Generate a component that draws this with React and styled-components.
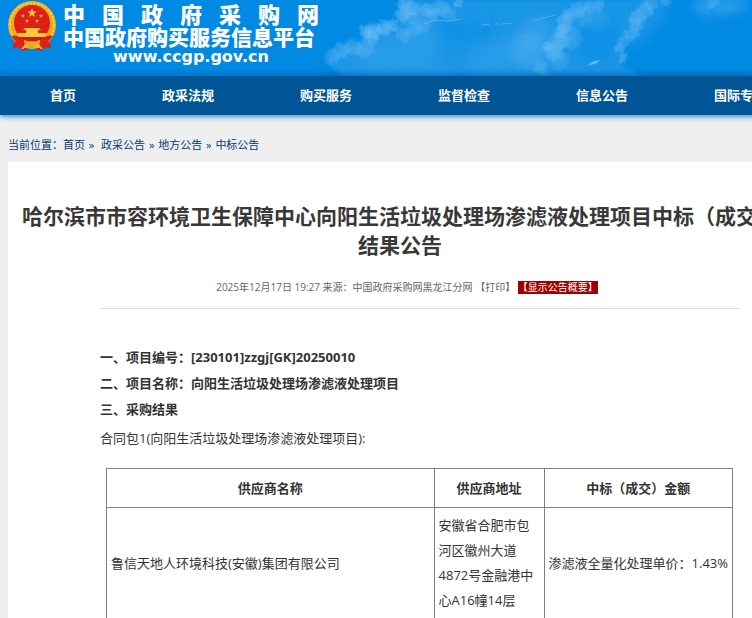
import React from "react";
import styled, { createGlobalStyle } from "styled-components";

const GlobalStyle = createGlobalStyle`
  * { box-sizing: border-box; }
  body {
    margin: 0;
    background: #efefef;
    color: #333;
    font-family: "Open Sans", "Noto Sans CJK SC", sans-serif;
    font-size: 13px;
    overflow: hidden;
  }
  a { color: inherit; text-decoration: none; }
`;

const Page = styled.div`
  min-width: 800px;
`;

const Header = styled.header`
  display: flex;
  height: 76px;
  padding-left: 8px;
  background: linear-gradient(#008ae4 0 68px, #0079cc 76px);
`;

const Emblem = styled.svg`
  flex: none;
  width: 48px;
  height: 54px;
`;

const Brand = styled.a`
  flex: none;
  display: block;
  width: 256px;
  margin-left: 7px;
  padding-top: 1px;
  color: #fff;
  font-family: "Noto Sans CJK SC", sans-serif;
  font-weight: 900;
`;

const BrandName = styled.span`
  display: block;
  font-size: 22px;
  line-height: 24px;
  text-align: justify;
  text-align-last: justify;
`;

const BrandPlatform = styled.span`
  display: block;
  font-size: 21px;
  line-height: 22px;
  white-space: nowrap;
`;

const BrandSite = styled.span`
  display: block;
  font-family: "DejaVu Sans", sans-serif;
  font-size: 16px;
  line-height: 20px;
  font-weight: 700;
  text-align: center;
`;

const Sky = styled.svg`
  flex: none;
  width: 432px;
  height: 76px;
`;

const Nav = styled.nav`
  display: flex;
  gap: 86px;
  height: 39px;
  padding: 0 0 2px 50px;
  align-items: center;
  background: #005596;
  box-shadow: 0 1px 6px #1678b8;
`;

const NavLink = styled.a`
  flex: none;
  color: #fff;
  font-weight: 700;
  line-height: 20px;
`;

const Breadcrumb = styled.nav`
  padding: 20px 8px 7px;
  color: #003b75;
  font-size: 11px;
  line-height: 20px;
`;

const Separator = styled.span`
  margin: 0 1px;
  white-space: pre;
`;

const Panel = styled.main`
  margin: 0 8px;
  padding: 40px 0 0;
  background: #fff;
`;

const Title = styled.h1`
  margin: 0;
  padding: 0 12px;
  color: #383838;
  font-size: 21px;
  line-height: 29px;
  text-align: center;
`;

const Body = styled.article`
  margin: 0 52px 0 92px;
`;

const Meta = styled.p`
  margin: 0;
  padding: 16px 26px 10px 0;
  border-bottom: 1px solid #ddd;
  color: #666;
  font-size: 10px;
  line-height: 22px;
  text-align: center;
  white-space: nowrap;
`;

const PlainButton = styled.button`
  padding: 0;
  border: 0;
  background: none;
  color: inherit;
  font: inherit;
  line-height: 13px;
`;

const SummaryButton = styled(PlainButton)`
  background: #a00000;
  color: #fff;
`;

const Sections = styled.div`
  padding-top: 35px;
`;

const SectionHeading = styled.h2`
  margin: 0;
  color: #333;
  font-family: "Noto Sans", "Noto Sans CJK SC", sans-serif;
  font-size: 13px;
  line-height: 26px;
`;

const PackageName = styled.p`
  margin: 3px 0 17px;
  line-height: 26px;
`;

const TableWrap = styled.div`
  padding: 0 7px 0 6px;
`;

const Table = styled.table`
  width: 100%;
  border-collapse: collapse;
  line-height: 25px;
  th, td { border: 1px solid #808080; }
`;

const HeadCell = styled.th`
  width: ${(p) => p.$width || "auto"};
  padding: 7px 4px 6px;
  font-weight: 700;
`;

const Cell = styled.td`
  padding: 5px 4px;
  white-space: ${(p) => (p.$single ? "nowrap" : "normal")};
`;

const navItems = ["首页", "政采法规", "购买服务", "监督检查", "信息公告", "国际专栏"];

// x, y, radius, opacity of each bright billow
const puffs = [
  [13, 56, 9, 0.35], [23, 50, 10, 0.4], [34, 47, 10, 0.4], [46, 49, 11, 0.35],
  [46, 32, 8, 0.6], [55, 31, 10, 0.6], [65, 28, 9, 0.55], [73, 25, 8, 0.5],
  [52, 38, 8, 0.4], [84, 35, 9, 0.35], [94, 30, 10, 0.35], [104, 26, 9, 0.35],
  [84, 4, 8, 0.5], [84, 15, 9, 0.6], [93, 8, 10, 0.45], [94, 17, 9, 0.35],
  [107, 10, 9, 0.5], [114, 15, 9, 0.4], [122, 8, 10, 0.4], [130, 14, 9, 0.3],
  [139, 3, 6, 0.5], [208, 50, 22, 0.22], [218, 34, 22, 0.14],
  [222, 68, 9, 0.35], [229, 47, 7, 0.5], [235, 51, 11, 0.5],
  [241, 40, 11, 0.5], [242, 31, 9, 0.45], [246, 24, 10, 0.5], [249, 15, 8, 0.5],
  [259, 10, 9, 0.4], [270, 7, 8, 0.4], [280, 6, 7, 0.35], [264, 17, 12, 0.25],
  [252, 38, 13, 0.3], [240, 60, 12, 0.3], [279, 20, 14, 0.15],
  [301, 48, 6, 0.5], [304, 57, 6, 0.5], [306, 39, 8, 0.4], [313, 33, 8, 0.4],
  [316, 25, 9, 0.45], [319, 17, 9, 0.45], [326, 11, 9, 0.4], [332, 4, 9, 0.4],
  [347, 1, 7, 0.4], [394, 2, 8, 0.35], [404, 7, 12, 0.18],
  [419, 4, 12, 0.15], [384, 6, 12, 0.15],
];

const Clouds = () => (
  <Sky viewBox="0 0 432 76" aria-hidden="true">
    <defs>
      <filter id="billow" x="-5%" y="-20%" width="110%" height="140%">
        <feTurbulence type="fractalNoise" baseFrequency="0.18" numOctaves="3" seed="8" result="noise" />
        <feDisplacementMap in="SourceGraphic" in2="noise" scale="8" xChannelSelector="R" yChannelSelector="G" />
      </filter>
      <filter id="soft" x="-10%" y="-20%" width="120%" height="140%">
        <feGaussianBlur stdDeviation="2" />
      </filter>
      <filter id="softer" x="-10%" y="-40%" width="120%" height="180%">
        <feGaussianBlur stdDeviation="7" />
      </filter>
      <radialGradient id="puff">
        <stop offset="0" stopColor="#78c2f5" />
        <stop offset="0.65" stopColor="#78c2f5" stopOpacity="0.7" />
        <stop offset="1" stopColor="#78c2f5" stopOpacity="0" />
      </radialGradient>
      <linearGradient id="shade" x1="0" y1="0" x2="0" y2="1">
        <stop offset="0" stopColor="#0066b0" stopOpacity="0" />
        <stop offset="1" stopColor="#0066b0" stopOpacity="0.35" />
      </linearGradient>
    </defs>
    <g fill="#78c2f5">
      <path filter="url(#soft)" opacity="0.22" d="M8 62 L20 50 L44 46 L46 30 L80 22 L84 0 L330 0 L312 22 L298 50 L304 66 L322 76 L22 76 Z" />
      <path filter="url(#softer)" opacity="0.14" d="M28 62 L45 42 L90 36 L105 22 L125 32 L115 60 L140 70 L70 76 Z M150 50 L230 18 L225 72 L150 70 Z" />
      <path filter="url(#softer)" opacity="0.2" d="M305 50 L326 5 L350 0 L345 18 L322 45 Z M368 0 L432 0 L420 12 L382 20 Z" />
    </g>
    <path filter="url(#softer)" fill="#008ae4" opacity="0.5" d="M115 22 L165 26 L180 34 L130 42 Z M262 26 L300 18 L294 54 L280 62 L260 52 Z" />
    <g filter="url(#billow)">
      {puffs.map(([x, y, r, o]) => (
        <circle key={`${x}-${y}`} cx={x} cy={y} r={r} fill="url(#puff)" opacity={o} />
      ))}
    </g>
    <path d="M105 24 L116 20 L128 21 L143 19 M162 25 L171 24 M176 24 H180 M183 24 L193 23 M214 21 L224 18 L236 15" stroke="#7cc4f6" strokeWidth="1" fill="none" opacity="0.5" />
    <path d="M269 66 L273 62 L281 60 L278 63 Z" fill="#8bccf8" opacity="0.7" />
    <rect y="70" width="432" height="6" fill="url(#shade)" />
  </Sky>
);

const star = "M0-5 L1.2-1.6 L4.8-1.5 L2 .6 L3 4 L0 2 L-3 4 L-2 .6 L-4.8-1.5 L-1.2-1.6 Z";

const NationalEmblem = () => (
  <Emblem viewBox="0 0 48 54" role="img" aria-label="国徽">
    <path d="M8 33 L5 48 L11 47 L14 51 L24 48 L34 51 L37 47 L43 48 L40 33 Z" fill="#d81913" />
    <circle cx="24" cy="25" r="24" fill="#e9a91c" />
    <circle cx="24" cy="25" r="22" fill="none" stroke="#f8cb45" strokeWidth="2" strokeDasharray="3 1" />
    <circle cx="24" cy="23" r="18" fill="#df2018" />
    <g fill="#f8c83d">
      <path d={star} transform="translate(24 13)" />
      <path d={star} transform="translate(15 16) scale(.42)" />
      <path d={star} transform="translate(33 16) scale(.42)" />
      <path d={star} transform="translate(19 21) scale(.42)" />
      <path d={star} transform="translate(29 21) scale(.42)" />
      <path d="M17 28 H31 L33 30 H15 Z M18 30 H30 V33 H18 Z M10 33 H38 L39 37 H9 Z" />
    </g>
    <path d="M10 37 H38 Q32 43 24 43 Q16 43 10 37 Z" fill="#d81913" />
    <path d="M3 36 Q11 34 17 42 L15 50 L10 47 L5 49 L8 42 Z M45 36 Q37 34 31 42 L33 50 L38 47 L43 49 L40 42 Z" fill="#df2018" />
    <path d="M16 41 Q24 45 32 41" fill="none" stroke="#f3b92b" strokeWidth="2" />
    <path d="M14 49 Q18 44 24 48 Q30 44 34 49" fill="none" stroke="#f3b92b" strokeWidth="2" />
    <circle cx="24" cy="45" r="4" fill="#e9a91c" />
  </Emblem>
);

export default function App() {
  return (
    <>
      <GlobalStyle />
      <Page>
        <Header>
          <NationalEmblem />
          <Brand href="#">
            <BrandName>中 国 政 府 采 购 网</BrandName>
            <BrandPlatform>中国政府购买服务信息平台</BrandPlatform>
            <BrandSite>www.ccgp.gov.cn</BrandSite>
          </Brand>
          <Clouds />
        </Header>
        <Nav>
          {navItems.map((item) => <NavLink href="#" key={item}>{item}</NavLink>)}
        </Nav>
        <Breadcrumb>
          当前位置：<a href="#">首页</a><Separator>{" »  "}</Separator>
          <a href="#">政采公告</a><Separator>{" » "}</Separator>
          <a href="#">地方公告</a><Separator>{" » "}</Separator>
          <a href="#">中标公告</a>
        </Breadcrumb>
        <Panel>
          <Title>哈尔滨市市容环境卫生保障中心向阳生活垃圾处理场渗滤液处理项目中标（成交）结果公告</Title>
          <Body>
            <Meta>
              2025年12月17日 19:27 来源：中国政府采购网黑龙江分网{" "}
              <PlainButton type="button">【打印】</PlainButton>{" "}
              <SummaryButton type="button">【显示公告概要】</SummaryButton>
            </Meta>
            <Sections>
              <SectionHeading>一、项目编号：[230101]zzgj[GK]20250010</SectionHeading>
              <SectionHeading>二、项目名称：向阳生活垃圾处理场渗滤液处理项目</SectionHeading>
              <SectionHeading>三、采购结果</SectionHeading>
              <PackageName>合同包1(向阳生活垃圾处理场渗滤液处理项目):</PackageName>
              <TableWrap>
                <Table>
                  <thead>
                    <tr>
                      <HeadCell scope="col">供应商名称</HeadCell>
                      <HeadCell scope="col" $width="110px">供应商地址</HeadCell>
                      <HeadCell scope="col" $width="187px">中标（成交）金额</HeadCell>
                    </tr>
                  </thead>
                  <tbody>
                    <tr>
                      <Cell>鲁信天地人环境科技(安徽)集团有限公司</Cell>
                      <Cell>安徽省合肥市包河区徽州大道4872号金融港中心A16幢14层</Cell>
                      <Cell $single>渗滤液全量化处理单价：1.43%</Cell>
                    </tr>
                  </tbody>
                </Table>
              </TableWrap>
            </Sections>
          </Body>
        </Panel>
      </Page>
    </>
  );
}
